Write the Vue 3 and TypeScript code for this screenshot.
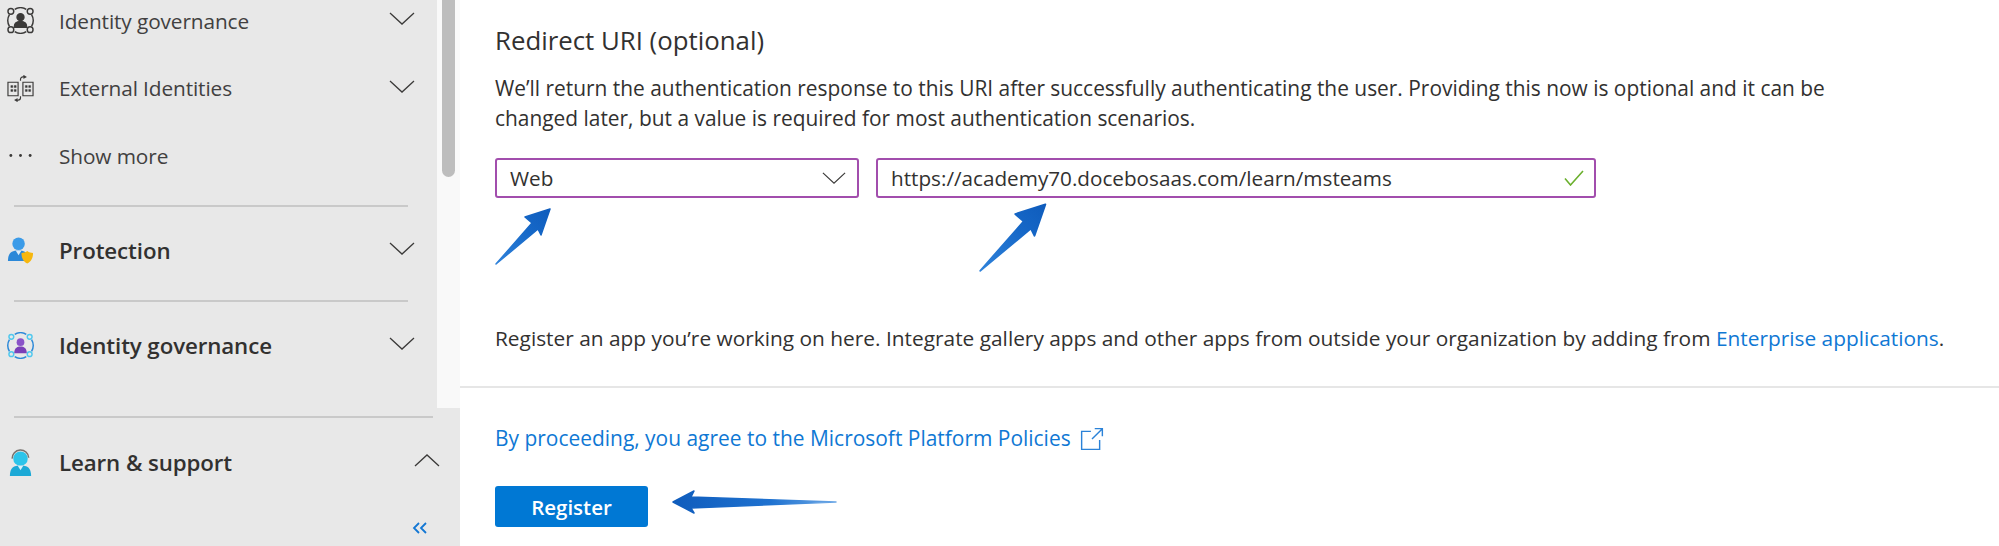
<script setup lang="ts">
const chevron = 'M1 1 L13 12 L25 1'
</script>

<template>
  <div class="page">
    <aside class="side">
      <div class="scroll-area">
        <nav class="nav">
          <div class="row first">
            <svg class="ic" viewBox="0 0 28 28" fill="none" stroke="#3b3a39" stroke-width="1.500">
              <path d="M8 2.500a11.500 11.500 0 0 1 12 0M2.500 8a12 12 0 0 0 0 12M25.500 8a12 12 0 0 1 0 12M8 25.500a11.500 11.500 0 0 0 12 0" />
              <circle cx="4" cy="4.500" r="3" /><circle cx="24" cy="4.500" r="3" /><circle cx="4" cy="23.500" r="3" /><circle cx="24" cy="23.500" r="3" />
              <circle cx="14" cy="10.500" r="3.600" fill="#3b3a39" /><path d="M7.500 21c0-5 3-6 6.500-6s6.500 1 6.500 6z" fill="#3b3a39" />
            </svg>
            <span class="label">Identity governance</span>
            <svg class="chev" viewBox="0 0 26 13"><path :d="chevron" /></svg>
          </div>
          <div class="row">
            <svg class="ic" viewBox="0 0 28 28" fill="none" stroke="#3b3a39" stroke-width="1.200">
              <path d="M1 7.500h10.500v14H1zM16.500 7.500H27v14H16.500z" />
              <path d="M4 11h2v2H4zM7.500 11h2v2h-2zM4 15h2v2H4zM7.500 15h2v2h-2zM19 11h2v2h-2zM22.500 11h2v2h-2zM19 15h2v2h-2zM22.500 15h2v2h-2z" fill="#3b3a39" stroke-width=".4" />
              <path d="M14 6V4.500c0-1.500 1-2.500 2.500-2.500h2.500M17 .5 19.500 2 17 3.500M14 22v1.500c0 1.500-1 2.500-2.500 2.500H9M11 24.500 8.500 26l2.500 1.500" />
            </svg>
            <span class="label">External Identities</span>
            <svg class="chev" viewBox="0 0 26 13"><path :d="chevron" /></svg>
          </div>
          <div class="row">
            <svg class="ic" viewBox="0 0 28 28" fill="#3b3a39">
              <circle cx="4" cy="14" r="1.500" /><circle cx="14" cy="14" r="1.500" /><circle cx="24" cy="14" r="1.500" />
            </svg>
            <span class="label">Show more</span>
          </div>
          <div class="divider" />
          <div class="row section">
            <svg class="ic" viewBox="0 0 28 28">
              <circle cx="12" cy="7" r="6.500" fill="#3b9be8" />
              <path d="M1 25c0-8 3-11 11-11s9 3 10 11z" fill="#2b88d8" />
              <path d="M9 14h6l-3 5z" fill="#dcecf9" />
              <path d="M21 14.500c2 1.500 4 1.800 6 2 0 5-1.500 8.500-6 11-4.500-2.500-6-6-6-11 2-.2 4-.5 6-2z" fill="#f6b70f" />
            </svg>
            <span class="label strong">Protection</span>
            <svg class="chev" viewBox="0 0 26 13"><path :d="chevron" /></svg>
          </div>
          <div class="divider" />
          <div class="row section">
            <svg class="ic" viewBox="0 0 28 28" fill="none">
              <path d="M8 2.500a11.500 11.500 0 0 1 12 0M2.500 8a12 12 0 0 0 0 12M25.500 8a12 12 0 0 1 0 12M8 25.500a11.500 11.500 0 0 0 12 0" stroke="#2b88d8" stroke-width="1.500" />
              <circle cx="4.500" cy="5" r="2.500" stroke="#50c8ee" stroke-width="1.500" /><circle cx="23.500" cy="5" r="2.500" stroke="#50c8ee" stroke-width="1.500" /><circle cx="4.500" cy="23" r="2.500" stroke="#50c8ee" stroke-width="1.500" /><circle cx="23.500" cy="23" r="2.500" stroke="#50c8ee" stroke-width="1.500" />
              <circle cx="14" cy="10.500" r="4" fill="#8a52c8" /><path d="M7.500 22c0-5.500 3-7 6.500-7s6.500 1.500 6.500 7z" fill="#7a3fb8" />
            </svg>
            <span class="label strong">Identity governance</span>
            <svg class="chev" viewBox="0 0 26 13"><path :d="chevron" /></svg>
          </div>
        </nav>
        <div class="strip"><div class="thumb" /></div>
      </div>
      <div class="foot">
        <div class="divider wide" />
        <div class="row section learn">
          <svg class="ic" viewBox="0 0 28 28" fill="none">
            <circle cx="14" cy="10" r="7.500" fill="#2cc4ea" />
            <path d="M3 28c0-9 4-11 11-11s11 2 11 11z" fill="#1ca9d6" />
            <path d="M11 17h6l-3 5z" fill="#d8f1f9" />
            <path d="M5.500 10a8.500 8.500 0 0 1 17-1" stroke="#77736f" stroke-width="1.600" />
          </svg>
          <span class="label strong">Learn &amp; support</span>
          <svg class="chev up" viewBox="0 0 26 13"><path d="M1 12 L13 1 L25 12" /></svg>
        </div>
        <div class="collapse">
          <svg viewBox="0 0 16 12" fill="none" stroke="#1377d4" stroke-width="1.800"><path d="M7 1 2 6l5 5M14 1 9 6l5 5" /></svg>
        </div>
      </div>
    </aside>

    <main class="main">
      <section class="form">
        <h2 class="title">Redirect URI (optional)</h2>
        <p class="desc">We’ll return the authentication response to this URI after successfully authenticating the user. Providing this now is optional and it can be changed later, but a value is required for most authentication scenarios.</p>
        <div class="fields">
          <div class="field sel">
            <span>Web</span>
            <svg class="chev small" viewBox="0 0 26 13"><path :d="chevron" /></svg>
          </div>
          <div class="field url">
            <span>https://academy70.docebosaas.com/learn/msteams</span>
            <svg class="check" viewBox="0 0 20 16" fill="none" stroke="#6bb02e" stroke-width="1.600"><path d="M1 8.500 6.500 15 19 1" /></svg>
          </div>
        </div>
        <p class="note">Register an app you’re working on here. Integrate gallery apps and other apps from outside your organization by adding from <span class="link">Enterprise applications</span>.</p>
      </section>
      <section class="actions">
        <div class="policy">
          <span class="link">By proceeding, you agree to the Microsoft Platform Policies</span>
          <svg class="ext" viewBox="0 0 22 22" fill="none" stroke="#2b82d8" stroke-width="1.300"><path d="M10 4H1.500v16.500H18V12M11 11 20.500 1.500M13.500 1.500h7v7" /></svg>
        </div>
        <button class="register" type="button">Register</button>
      </section>

      <svg class="arrow a1" viewBox="0 0 58 58">
        <defs>
          <linearGradient id="diag" x1="0" y1="1" x2="1" y2="0">
            <stop offset="0" stop-color="#2f82da" />
            <stop offset=".6" stop-color="#1668c8" />
            <stop offset="1" stop-color="#0f5cbc" />
          </linearGradient>
          <linearGradient id="horiz" x1="0" y1="0" x2="1" y2="0">
            <stop offset="0" stop-color="#0f5cbc" />
            <stop offset=".6" stop-color="#1f72d0" />
            <stop offset="1" stop-color="#6da8e6" />
          </linearGradient>
        </defs>
        <path class="head" fill="url(#diag)" stroke="url(#diag)" d="M55 2 30 10 37 16 1 57 43 22 46 28Z" />
      </svg>
      <svg class="arrow a2" viewBox="0 0 58 58">
        <path class="head" fill="url(#diag)" stroke="url(#diag)" d="M55 2 30 10 37 16 1 57 43 22 46 28Z" />
      </svg>
      <svg class="arrow a3" viewBox="0 0 168 28">
        <path class="head" fill="url(#horiz)" stroke="url(#horiz)" d="M2 14 23 3 20 9 165 14 20 20 23 25Z" />
      </svg>
    </main>
  </div>
</template>

<style>
html, body { margin: 0; background: #fff; }
</style>

<style scoped>
.page {
  display: flex;
  width: 1999px;
  height: 546px;
  overflow: hidden;
  font-family: "Open Sans", "Noto Sans", sans-serif;
  color: #323130;
}
.side {
  width: 460px;
  flex: none;
  display: flex;
  flex-direction: column;
  background: #e8e8e8;
}
.scroll-area {
  display: flex;
  height: 408px;
  flex: none;
  overflow: hidden;
}
.nav { width: 437px; flex: none; }
.strip { flex: 1; background: #f9f9f9; padding-left: 5px; }
.thumb { width: 13px; height: 177px; background: #bdbdbd; border-radius: 0 0 7px 7px; }
.row {
  display: flex;
  align-items: center;
  height: 67.500px;
  padding-left: 7px;
  position: relative;
}
.row.first { margin-top: -13px; }
.ic { width: 27px; height: 27px; flex: none; }
.label { margin-left: 25px; font-size: 20.800px; color: #414040; letter-spacing: -.1px; white-space: nowrap; }
.label.strong { font-weight: 600; font-size: 22.300px; color: #323130; }
.chev { width: 26px; height: 13px; fill: none; stroke: #3b3a39; stroke-width: 1.300; margin: -4px 22px 0 auto; flex: none; }
.chev.up { margin-right: 20px; margin-top: -5px; }
.divider { height: 2px; background: #c9c9c9; margin: 15px 29px 0 14px; }
.row.section { margin-top: 10px; margin-bottom: 15px; }
.divider + .row.section { margin-bottom: 0; }
.row.section + .divider { margin-top: 14px; }
.divider + .row.section + .divider { margin-top: 16px; }
.foot { flex: 1; padding-top: 8px; }
.divider.wide { margin: 0 27px 0 14px; }
.learn { margin-top: 11px !important; }
.collapse { display: flex; justify-content: flex-end; padding: 25px 32px 0 0; }
.collapse svg { width: 16px; height: 12px; }

.main { flex: 1; position: relative; }
.form { height: 386px; padding: 0 0 0 35px; border-bottom: 2px solid #e6e6e6; box-sizing: content-box; }
.title { margin: 0; padding-top: 24px; font-size: 25.800px; line-height: 32px; font-weight: 400; color: #323130; }
.desc { margin: 18px 0 0; width: 1350px; font-size: 20.900px; line-height: 29.500px; color: #323130; }
.fields { display: flex; gap: 17px; margin-top: 25px; }
.field {
  height: 40px;
  box-sizing: border-box;
  border: 2px solid #a24ead;
  border-radius: 3px;
  display: flex;
  align-items: center;
  padding-left: 13px;
  font-size: 20.700px;
  color: #323130;
}
.sel { width: 364px; }
.url { width: 720px; }
.chev.small { width: 24px; height: 12px; margin: 0 11px 0 auto; }
.check { width: 20px; height: 16px; margin-left: auto; margin-right: 10px; }
.note { margin: 126px 0 0; font-size: 20.860px; line-height: 29px; white-space: nowrap; color: #323130; }
.link { color: #0f78d4; }
.actions { padding: 35px 0 0 35px; }
.policy { display: flex; align-items: center; gap: 9px; font-size: 20.950px; height: 29px; }
.ext { width: 24px; height: 24px; margin-top: 3px; }
.register {
  display: block;
  margin-top: 34px;
  width: 153px;
  height: 41px;
  border: 0;
  border-radius: 3px;
  background: #0078d4;
  color: #fff;
  font: 600 20.500px "Open Sans", "Noto Sans", sans-serif;
}
.arrow { position: absolute; }
.head { stroke-width: 1.500; stroke-linejoin: round; }
.a1 { left: 35px; top: 207px; width: 58px; height: 58px; }
.a2 { left: 519px; top: 201px; width: 70px; height: 72px; }
.a3 { left: 211px; top: 488px; width: 168px; height: 28px; }
</style>
